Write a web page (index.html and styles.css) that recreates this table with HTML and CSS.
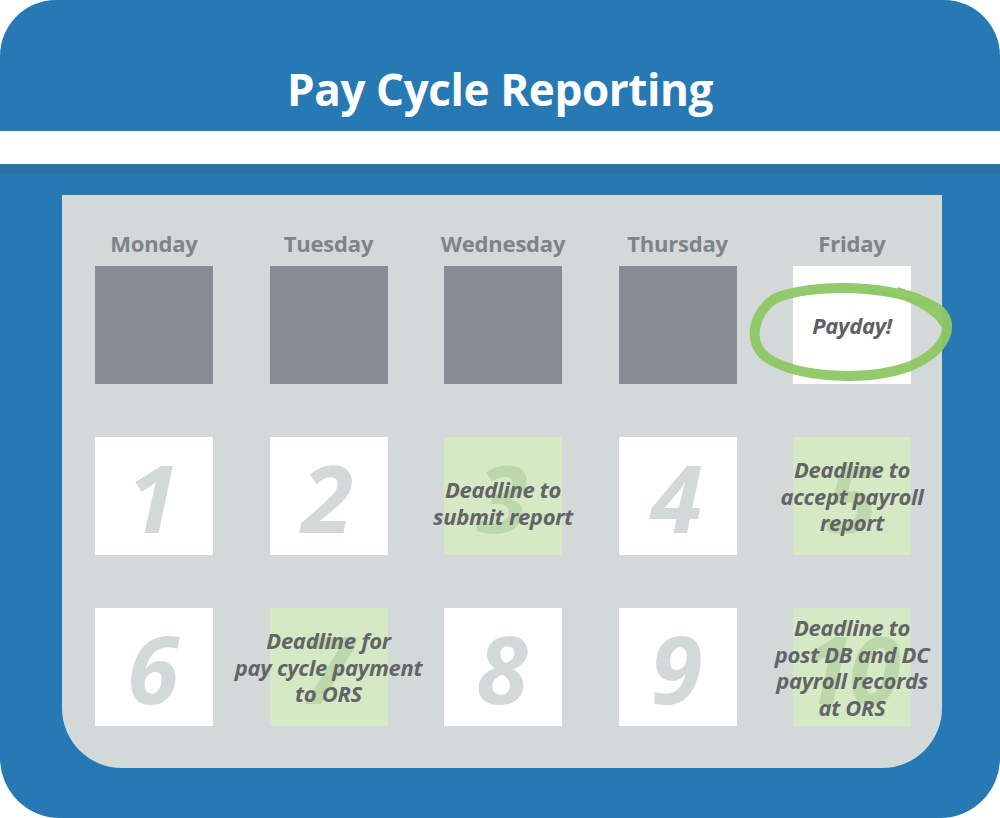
FILE: index.html
```html
<!DOCTYPE html>
<html>
<head>
<meta charset="utf-8">
<title>Pay Cycle Reporting</title>
<link rel="stylesheet" href="styles.css">
</head>
<body>
<div class="frame">
  <header class="head"><h1 class="title">Pay Cycle Reporting</h1></header>
  <div class="band"></div>
  <div class="strip"></div>
  <main class="body">
    <section class="panel">
      <div class="days">
        <div class="day">Monday</div>
        <div class="day">Tuesday</div>
        <div class="day">Wednesday</div>
        <div class="day">Thursday</div>
        <div class="day">Friday</div>
      </div>
      <div class="grid">
        <div class="cell dark"></div>
        <div class="cell dark"></div>
        <div class="cell dark"></div>
        <div class="cell dark"></div>
        <div class="cell white payday">
          <span class="note payday-text">Payday!</span>
          <svg class="circle" width="206" height="104" viewBox="0 0 206 104">
            <path class="brush" d="M 26 18 C 60 2, 150 2, 190 28 C 208 42, 200 70, 160 86 C 120 100, 50 98, 18 76 C 0 62, 4 34, 26 18" />
            <path class="brush thin" d="M 120 10 C 150 12, 175 22, 195 42" />
            <path class="scratch" d="M 150 7 L 172 14 M 158 15 L 184 25 M 176 19 L 192 32 M 186 34 L 199 52" />
          </svg>
        </div>

        <div class="cell white"><span class="num">1</span></div>
        <div class="cell white"><span class="num">2</span></div>
        <div class="cell green"><span class="num">3</span><span class="note low">Deadline to<br>submit report</span></div>
        <div class="cell white"><span class="num">4</span></div>
        <div class="cell green"><span class="num">5</span><span class="note">Deadline to<br>accept payroll<br>report</span></div>

        <div class="cell white"><span class="num">6</span></div>
        <div class="cell green"><span class="num">7</span><span class="note">Deadline for<br>pay cycle payment<br>to ORS</span></div>
        <div class="cell white"><span class="num">8</span></div>
        <div class="cell white"><span class="num">9</span></div>
        <div class="cell green"><span class="num">10</span><span class="note">Deadline to<br>post DB and DC<br>payroll records<br>at ORS</span></div>
      </div>
    </section>
  </main>
</div>
</body>
</html>
```

FILE: styles.css
```css
html, body {
  margin: 0;
  padding: 0;
  background: #ffffff;
}

.frame {
  width: 1000px;
  height: 818px;
  background: #2779b4;
  border-radius: 56px 56px 60px 60px;
  overflow: hidden;
  display: flex;
  flex-direction: column;
  font-family: "Open Sans", "Liberation Sans", sans-serif;
}

.head {
  flex: 0 0 131px;
  display: flex;
  justify-content: center;
  align-items: flex-start;
}

.title {
  margin: 0;
  padding-top: 67px;
  color: #ffffff;
  font-size: 44px;
  font-weight: 700;
  line-height: 44px;
  letter-spacing: -0.4px;
}

.band {
  flex: 0 0 33px;
  background: #ffffff;
}

.strip {
  flex: 0 0 11px;
  background: #2c72a5;
}

.body {
  flex: 1 1 auto;
  padding: 20px 58px 50px 62px;
  display: flex;
}

.panel {
  flex: 1;
  background: #d3d9d8;
  border-radius: 0 0 60px 60px;
  padding-top: 32px;
}

.days,
.grid {
  display: grid;
  grid-template-columns: repeat(5, 118px);
  column-gap: 56.5px;
  padding-left: 33px;
}

.days {
  height: 32px;
  margin-bottom: 7px;
}

.grid {
  grid-template-rows: repeat(3, 118px);
  row-gap: 53px;
}

.day {
  justify-self: center;
  margin: 0 -40px;
  white-space: nowrap;
  color: #7f838a;
  font-size: 22px;
  font-weight: 700;
  line-height: 32px;
  letter-spacing: -0.2px;
}

.cell {
  display: grid;
  align-items: center;
  position: relative;
}

.cell > * {
  grid-area: 1 / 1;
}

.dark { background: #878c94; }
.white { background: #ffffff; }
.green { background: #d5e9c5; }

.num {
  justify-self: center;
  font-size: 94px;
  font-weight: 700;
  font-style: italic;
  line-height: 1;
  color: #d3d9d8;
  letter-spacing: -4px;
  margin-top: 2px;
  padding-right: 6px;
}

.green .num { color: #bcd8aa; }

.note {
  justify-self: stretch;
  margin: 0 -70px;
  white-space: nowrap;
  text-align: center;
  color: #636467;
  font-size: 22px;
  font-weight: 700;
  font-style: italic;
  line-height: 26.5px;
  letter-spacing: -0.3px;
  position: relative;
  z-index: 1;
}

.low { margin-top: 13px; }

.payday-text {
  color: #5e5f62;
  font-size: 22px;
}

.circle {
  position: absolute;
  left: -45px;
  top: 15px;
  z-index: 2;
  overflow: visible;
}

.brush {
  fill: none;
  stroke: #8dc864;
  stroke-width: 10;
  stroke-linecap: round;
  opacity: 0.95;
}

.brush.thin {
  stroke-width: 4;
}

.scratch {
  fill: none;
  stroke: #8dc864;
  stroke-width: 1.5;
  stroke-linecap: round;
}
```
